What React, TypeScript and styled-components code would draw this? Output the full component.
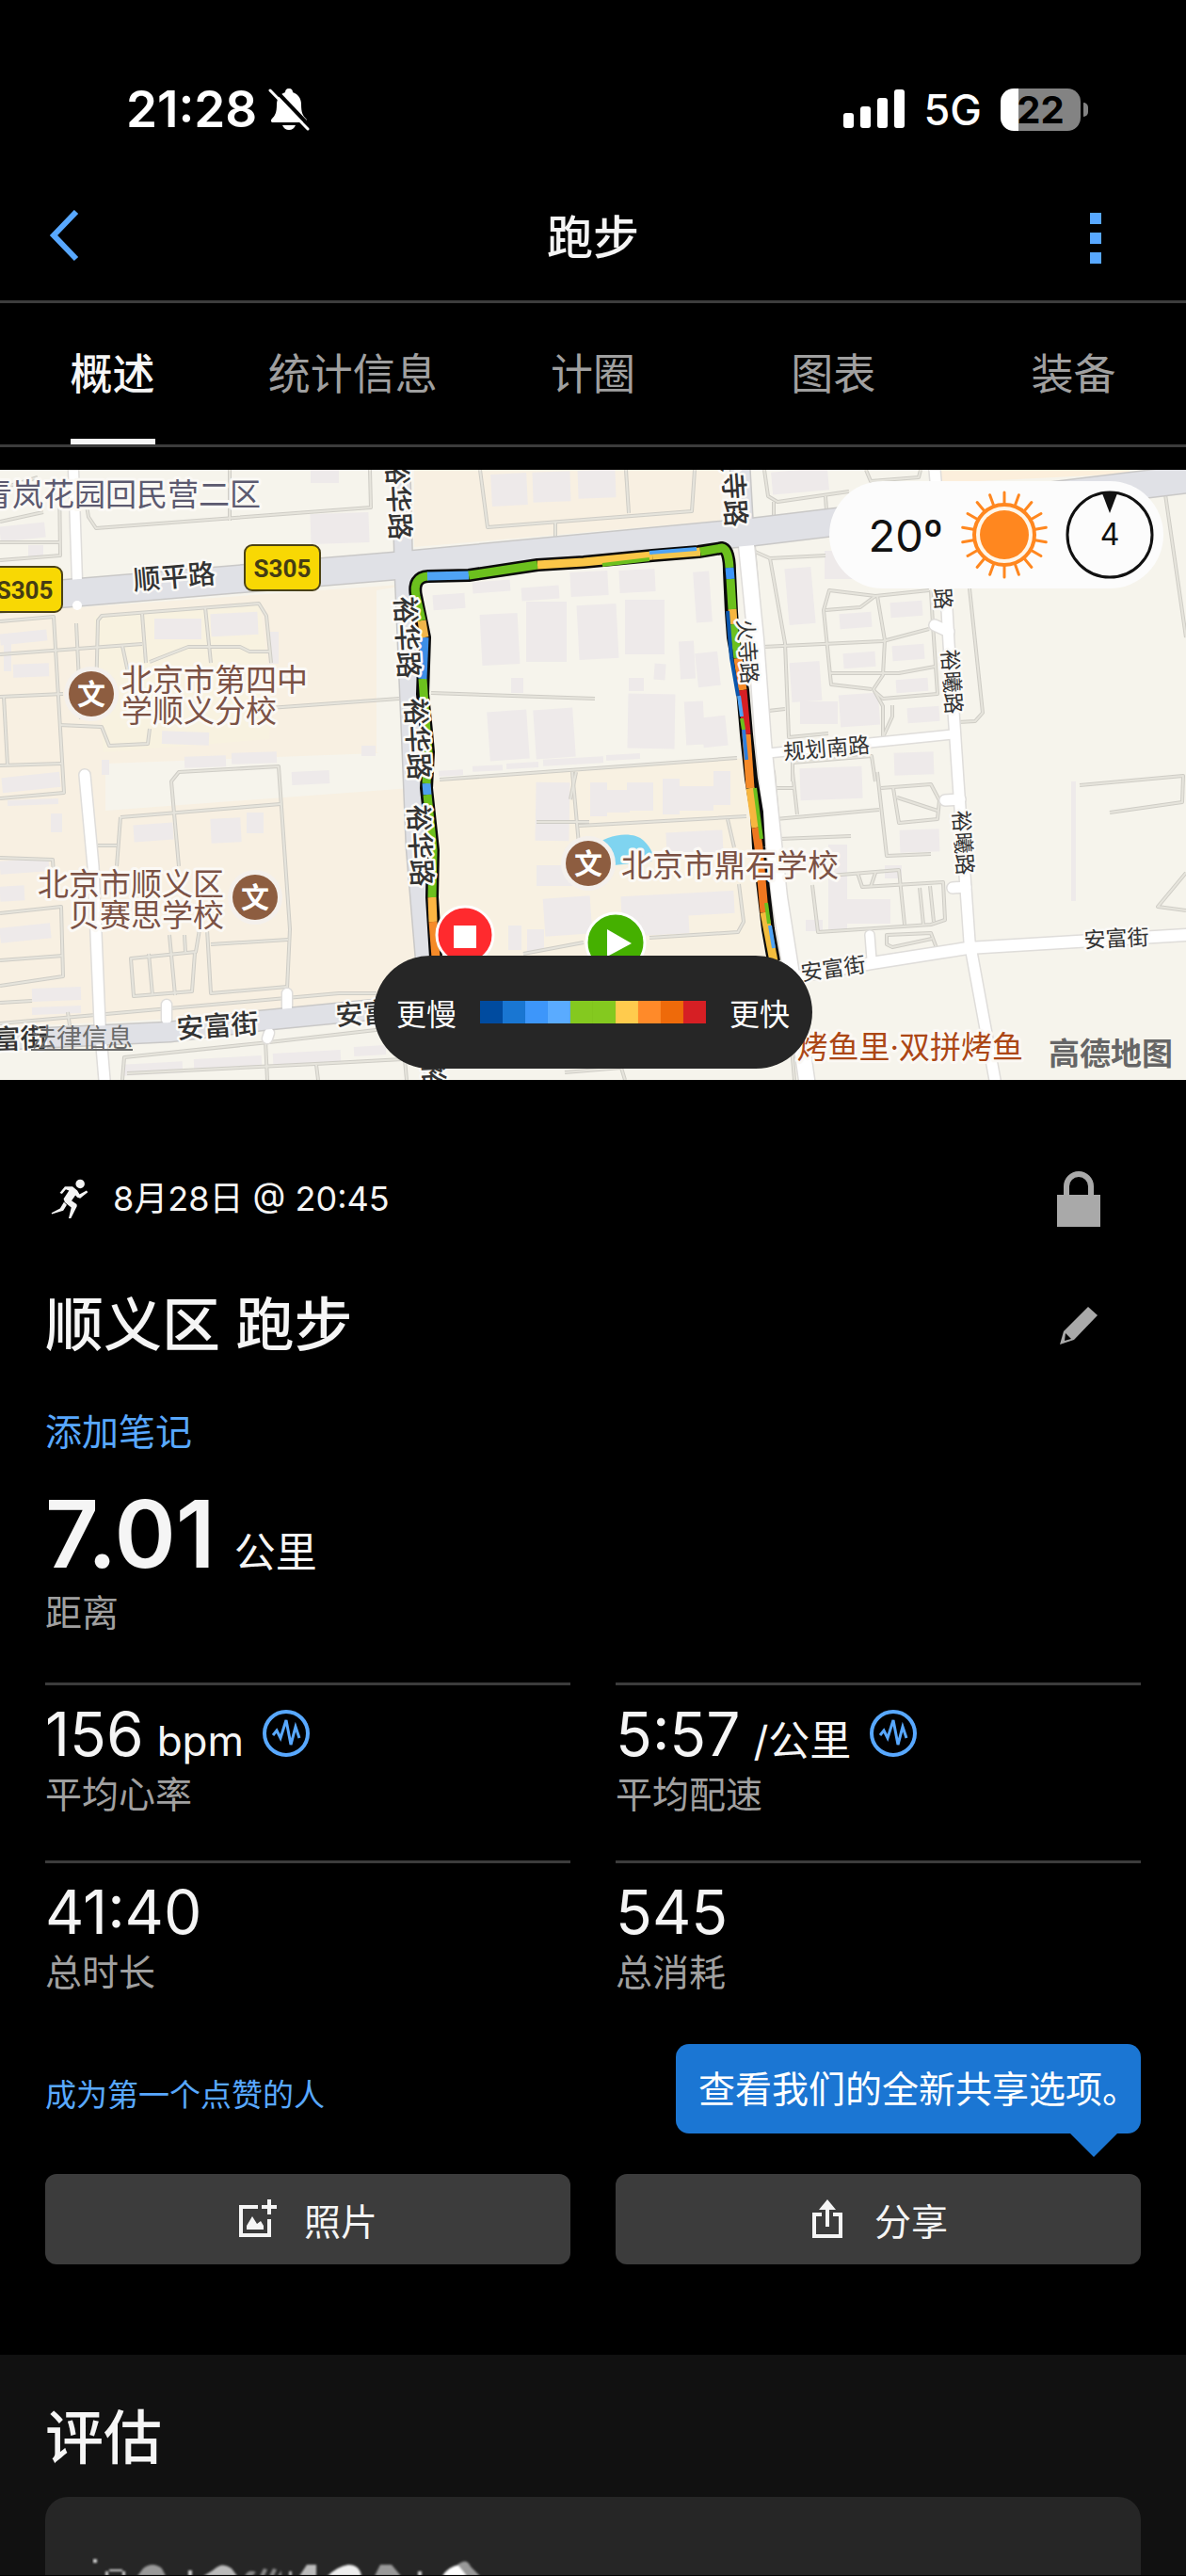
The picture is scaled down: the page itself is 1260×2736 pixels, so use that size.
import React from 'react';
import styled, { createGlobalStyle } from 'styled-components';

const FONT = 'Inter, "Noto Sans CJK SC", sans-serif';

/* ---------- map data ---------- */

const landAreas = [
  { points: '0,152 425,122 440,330 455,570 0,592', fill: '#f8f0e2' },
  { points: '100,156 276,142 288,240 286,286 110,300', fill: '#f8f2e0' },
  { points: '400,128 424,124 437,300 428,312 400,300', fill: '#f6f4ec' },
  { points: '112,312 428,300 437,338 112,362', fill: '#f6f4ec' },
  { points: '440,0 770,0 765,54 440,82', fill: '#f8f0e2' },
  { points: '460,330 795,306 832,520 465,520', fill: '#f8f1e2' },
  { points: '1000,0 1200,0 1200,4 1000,14', fill: '#fcefdc' },
];

// x, y, width, height, tilt
const buildings: number[][] = [
  [330, 0, 30, 14, 0], [330, 46, 62, 32, -2], [0, 58, 48, 16, -6], [30, 80, 16, 14, 0],
  [164, 158, 50, 22, 0], [224, 152, 50, 24, -3], [286, 172, 10, 34, 0], [0, 172, 50, 12, -6],
  [4, 184, 8, 30, 0], [14, 206, 38, 14, -2], [172, 278, 50, 14, 2], [196, 304, 44, 12, -2],
  [246, 300, 48, 12, -2], [384, 293, 15, 11, 0], [310, 320, 40, 14, -3], [108, 308, 8, 16, 0],
  [2, 324, 62, 16, -6], [8, 350, 54, 6, -2], [54, 365, 12, 20, 0], [142, 376, 42, 18, -4],
  [224, 370, 32, 26, -3], [262, 364, 18, 22, 0], [0, 414, 52, 14, -4], [0, 442, 26, 16, -3],
  [0, 484, 54, 16, -6], [34, 550, 52, 14, -2], [34, 570, 52, 8, -2], [130, 630, 64, 12, -3],
  [206, 624, 72, 12, -3], [290, 618, 72, 12, -3], [376, 612, 34, 10, -3],
  [522, 4, 38, 34, -3], [566, 2, 40, 32, -2], [614, 0, 40, 30, -2],
  [460, 132, 34, 16, -4], [502, 118, 40, 12, -4], [554, 124, 40, 14, -4], [606, 108, 40, 26, -3],
  [658, 106, 38, 24, -3], [738, 108, 17, 54, -4], [511, 153, 40, 54, -3], [559, 140, 43, 64, 0],
  [614, 143, 42, 58, -3], [664, 138, 42, 58, 0], [722, 182, 16, 40, -3], [740, 194, 24, 36, -6],
  [543, 221, 13, 16, 0], [668, 221, 16, 14, 0], [695, 206, 12, 17, 4], [667, 238, 50, 58, 1],
  [519, 256, 42, 52, -4], [568, 254, 42, 52, -4], [728, 246, 20, 46, -3], [746, 262, 26, 32, -6],
  [466, 319, 26, 6, -3], [502, 314, 32, 6, -3], [538, 311, 34, 6, -3], [577, 306, 64, 7, -3],
  [644, 302, 36, 6, -3], [569, 332, 36, 62, 1], [627, 332, 18, 36, 0], [645, 340, 24, 24, 0],
  [666, 332, 28, 30, 0], [704, 328, 18, 38, 0], [720, 336, 38, 26, 0], [758, 320, 18, 36, 0],
  [708, 384, 60, 26, -3], [570, 420, 44, 22, 0], [578, 454, 50, 40, -4], [660, 450, 120, 24, -3],
  [560, 488, 18, 24, 0], [664, 474, 68, 20, -3], [540, 484, 14, 26, 0],
  [820, 0, 60, 24, -5], [836, 104, 28, 60, -5], [876, 86, 30, 30, 0], [946, 140, 34, 16, -4],
  [892, 152, 34, 16, -4], [948, 186, 34, 16, -4], [896, 194, 34, 16, -4], [840, 204, 32, 42, -4],
  [952, 222, 34, 14, -4], [892, 238, 42, 34, -4], [964, 252, 34, 16, -4], [850, 246, 40, 24, 0],
  [850, 316, 66, 34, -2], [950, 300, 42, 24, -2], [956, 382, 42, 24, -2], [880, 398, 20, 90, 0],
  [896, 456, 50, 26, 0], [940, 420, 18, 14, 0], [856, 478, 18, 12, 0], [1138, 331, 5, 127, 0],
];

const footways = [
  '92,38 94,50 102,62 394,40 393,0', '244,0 244,54', '0,55 46,45', '63,10 64,91 0,96', '0,77 63,77',
  '0,20 40,8', '0,161 57,156 68,343 0,349', '102,240 104,160 108,155 275,142 283,155 288,205',
  '151,153 155,205', '218,146 224,205', '0,196 151,185', '159,204 200,188 255,188 265,193 286,193',
  '130,187 136,215', '81,163 86,265', '0,241 67,238', '4,241 8,314', '63,271 108,273 116,293 157,291 159,275',
  '0,314 65,312', '286,253 424,243', '190,421 182,331 190,321 296,315 308,488 305,551',
  '128,369 298,355', '124,421 128,369', '104,399 124,399', '224,504 306,499', '220,488 224,556 305,549',
  '207,513 204,554 142,559 139,519 208,512 212,488', '158,514 162,558', '180,494 186,558', '196,494 197,512',
  '0,521 67,516', '0,471 65,464 67,538 0,548', '0,412 56,414 57,430', '0,566 34,564', '72,576 74,590',
  '0,588 360,556 400,556', '130,648 132,624 286,608 408,594', '282,606 284,648', '135,641 335,631 428,626',
  '336,632 338,648', '430,626 432,648',
  '510,0 518,61 735,44 738,0', '665,0 668,46', '590,56 590,71', '458,237 632,243', '467,329 783,306',
  '608,321 615,398', '615,378 793,368', '773,371 780,401', '785,440 790,480 784,491 690,497',
  '556,514 620,502', '612,321 606,350', '626,374 570,374',
  '812,0 816,28 826,34 902,23', '822,34 822,49', '877,28 878,43', '920,0 925,12 976,8 978,0',
  '800,86 818,94 877,91', '801,81 818,293', '818,94 834,184 838,284 880,280', '810,188 938,182 987,169',
  '926,233 883,228 875,149 881,128 930,134 987,128', '932,134 940,181 938,218 928,233 938,251 938,284',
  '877,149 914,146 930,134', '881,216 955,216 993,209', '989,128 991,164 996,238 938,243 930,236',
  '1030,126 1044,258 1036,267 1018,268', '816,256 834,254', '948,250 948,262 938,284',
  '842,331 842,311 926,304 930,331', '1238,26 1260,178', '818,311 822,321 828,392',
  '842,321 847,366', '824,371 934,361', '932,321 942,410 989,408',
  '936,338 989,334 998,351 996,371 955,375 949,338', '953,348 996,362', '824,338 844,338', '828,392 904,389',
  '881,431 955,425 961,483', '911,428 916,443 1002,438 1004,478 989,483 869,491 863,441', '977,444 981,483',
  '988,442 992,480', '925,443 930,428', '995,508 989,492 942,494 942,504 948,507 990,498',
  '1147,335 1257,325 1256,353 1179,364', '1260,428 1230,464 1260,468', '816,321 844,648',
  '600,640 660,635 664,648',
];

const whiteRoads = [
  { points: '78,0 82,118', w: 10 },
  { points: '90,324 99,421 106,588 111,648', w: 11 },
  { points: '177,568 177,584', w: 10 },
  { points: '305,556 305,572', w: 10 },
  { points: '286,598 284,604', w: 10 },
  { points: '793,80 803,180 811,290 816,340 828,454 840,530 857,648', w: 16 },
  { points: '993,0 1006,148 1008,184 1014,271 1018,331 1030,501 1057,648', w: 11 },
  { points: '816,301 1012,281', w: 9 },
  { points: '848,538 926,524 1028,508 1260,494', w: 12 },
  { points: '924,494 926,520', w: 9 },
  { points: '993,165 1008,172', w: 11 },
  { points: '1004,351 1020,350', w: 11 },
  { points: '1012,444 1026,443', w: 11 },
];

const mainRoads = [
  { points: '-10,138 420,102 800,66 1270,9', w: 28 },
  { points: '426,-5 429,110 437,300 441,400 452,530 462,660', w: 18 },
  { points: '786,-5 790,66', w: 20 },
  { points: '-10,606 180,597 277,585 420,571', w: 20 },
];

const routePath =
  'M463 518 L459 454 L460 404 L453 338 L455 300 L453 278 L449 238 L451 178 L442 134 Q438 114 455 113 L498 112 L571 101 L620 98 L693 91 L742 87 L767 83 Q775 84 775 108 L777 151 L779 178 L789 234 L793 281 L798 328 L804 364 L806 401 L812 454 L816 488 L822 522';

const routeParts = [
  { d: 'M463 518 L460 480', c: '#f58a28' },
  { d: 'M460 480 L459 454', c: '#fcb643' },
  { d: 'M459 454 L460 404 L454 345', c: '#6cc01e' },
  { d: 'M454 345 L453 333', c: '#4fa0ee' },
  { d: 'M453 333 L455 300 L453 278 L449 222', c: '#6cc01e' },
  { d: 'M449 222 L451 178', c: '#3d8ee6' },
  { d: 'M451 178 L448 160', c: '#f0b54a' },
  { d: 'M448 160 L442 134 Q438 114 455 113', c: '#6cc01e' },
  { d: 'M454 113 L498 112', c: '#4fa3f5' },
  { d: 'M498 112 L571 101', c: '#6cc01e' },
  { d: 'M571 101 L620 98 L693 91', c: '#fbc648' },
  { d: 'M693 91 L744 87', c: '#f5c64e' },
  { d: 'M744 87 L767 83 Q774 84 775 104', c: '#6cc01e' },
  { d: 'M775 104 L776 116', c: '#3d96fa' },
  { d: 'M776 116 L778 148', c: '#6cc01e' },
  { d: 'M778 148 L779 164', c: '#f7b63f' },
  { d: 'M779 164 L784 200', c: '#6cc01e' },
  { d: 'M784 200 L789 234', c: '#f58a28' },
  { d: 'M789 234 L793 281', c: '#d61f24' },
  { d: 'M793 281 L797 338', c: '#f58a28' },
  { d: 'M797 338 L803 380', c: '#f7b63f' },
  { d: 'M803 380 L806 401 L812 470', c: '#ee7720' },
  { d: 'M812 470 L822 522', c: '#f3bd3e' },
];

const routeEdges = [
  { d: 'M690 88 L740 84', c: '#4fa3f5' },
  { d: 'M640 101 L690 95', c: '#6cc01e' },
  { d: 'M773 150 L777 200 L784 240', c: '#0b57ad' },
  { d: 'M785 240 L788 262', c: '#4fa3f5' },
  { d: 'M788 264 L790 276', c: '#6cc01e' },
  { d: 'M790 276 L793 308', c: '#2f7fdc' },
  { d: 'M802 338 L809 392', c: '#6cc01e' },
  { d: 'M814 460 L817 482', c: '#6cc01e' },
  { d: 'M818 484 L822 508', c: '#4fa3f5' },
];

const roadLabels = [
  { text: '顺平路', x: 185, y: 113, size: 29, tilt: -5 },
  { text: '安富街', x: 231, y: 590, size: 29, tilt: -4 },
  { text: '安富街', x: 400, y: 576, size: 29, tilt: -4 },
  { text: '安富街', x: 7, y: 604, size: 29, tilt: -2 },
  { text: '安富街', x: 885, y: 529, size: 23, tilt: -8 },
  { text: '安富街', x: 1186, y: 497, size: 23, tilt: -3 },
  { text: '规划南路', x: 878, y: 295, size: 23, tilt: -5 },
  { text: '裕华路', x: 424, y: 31, size: 29, tilt: 87 },
  { text: '裕华路', x: 433, y: 178, size: 29, tilt: 87 },
  { text: '裕华路', x: 444, y: 286, size: 29, tilt: 87 },
  { text: '裕华路', x: 447, y: 399, size: 29, tilt: 87 },
  { text: '裕华路', x: 463, y: 673, size: 29, tilt: 87 },
  { text: '火寺路', x: 780, y: 17, size: 29, tilt: 86 },
  { text: '火寺路', x: 795, y: 193, size: 23, tilt: 86 },
  { text: '裕曦路', x: 1001, y: 114, size: 23, tilt: 86 },
  { text: '裕曦路', x: 1012, y: 225, size: 23, tilt: 86 },
  { text: '裕曦路', x: 1024, y: 396, size: 23, tilt: 86 },
];

const schools = [
  { x: 97, y: 238 },
  { x: 271, y: 454 },
  { x: 625, y: 418 },
];

const paceColors = [
  '#004b9f', '#1976d2', '#3d96fa', '#5aabff', '#84c91f',
  '#84c91f', '#ffcb4d', '#ff8a29', '#ee6a0a', '#d61f24',
];

const tabs = ['概述', '统计信息', '计圈', '图表', '装备'];

const stats = [
  { value: '156', unit: 'bpm', label: '平均心率', chart: true },
  { value: '5:57', unit: '/公里', label: '平均配速', chart: true },
  { value: '41:40', label: '总时长' },
  { value: '545', label: '总消耗' },
];

/* ---------- icons ---------- */

const BellOffIcon = () => (
  <svg width="44" height="46" viewBox="0 0 44 46" aria-hidden="true">
    <path
      d="M22 1c3 0 4 2 4 4 6 2 9 7 9 13 0 9 2 12 5 15 2 2 1 4-1 4H5c-2 0-3-2-1-4 3-3 5-6 5-15 0-6 3-11 9-13 0-2 1-4 4-4z"
      fill="#fff"
    />
    <path d="M15 40h14c-1 3-4 5-7 5s-6-2-7-5z" fill="#fff" />
    <path d="M5 0L44 41" stroke="#000" strokeWidth="4" />
    <path d="M2 3L42 44" stroke="#fff" strokeWidth="3" strokeLinecap="round" />
  </svg>
);

const SignalIcon = () => (
  <svg width="66" height="42" viewBox="0 0 66 42" fill="#fff" aria-hidden="true">
    <rect x="0" y="25" width="11" height="16" rx="3" />
    <rect x="18" y="18" width="11" height="23" rx="3" />
    <rect x="36" y="9" width="11" height="32" rx="3" />
    <rect x="54" y="0" width="11" height="41" rx="3" />
  </svg>
);

const BackIcon = () => (
  <svg width="34" height="60" viewBox="0 0 34 60" fill="none" aria-hidden="true">
    <path d="M30 2L6 27L30 52" stroke="#58a8ff" strokeWidth="6" />
  </svg>
);

const MoreIcon = () => (
  <svg width="12" height="54" viewBox="0 0 12 54" fill="#58a8ff" aria-hidden="true">
    <rect width="12" height="12" />
    <rect y="21" width="12" height="12" />
    <rect y="42" width="12" height="12" />
  </svg>
);

const SunIcon = () => (
  <svg width="94" height="94" viewBox="-47 -47 94 94" aria-hidden="true">
    {Array.from({ length: 18 }, (_, i) => (
      <path
        key={i}
        d="M0 -32V-45"
        stroke="#ff871f"
        strokeWidth="3"
        strokeLinecap="round"
        transform={`rotate(${i * 20})`}
      />
    ))}
    <circle r="32" fill="#fff6e8" stroke="#ff871f" strokeWidth="4" />
    <circle r="26" fill="#ff871f" />
  </svg>
);

const WindIcon = () => (
  <svg width="94" height="94" viewBox="-47 -47 94 94" aria-hidden="true">
    <circle r="45" fill="none" stroke="#111" strokeWidth="3" />
    <path d="M-8 -44H8L0 -23z" fill="#111" />
    <text y="11" textAnchor="middle" fontSize="32" fontFamily="Inter, sans-serif" fill="#111">4</text>
  </svg>
);

const RunnerIcon = () => (
  <svg width="40" height="44" viewBox="40 34 118 130" fill="#f5f5f5" aria-hidden="true">
    <circle cx="132" cy="53" r="14" />
    <path d="M68 81L84 61L108 61L123 74L130 86L152 74L156 79L132 98L123 95L117 89L105 106L121 117L122 123L103 161L96 161L104 127L84 111L80 100L97 74L87 70L75 84z" />
    <path d="M81 110L90 119L79 137L43 148L42 144L69 130z" />
  </svg>
);

const LockIcon = () => (
  <svg width="48" height="60" viewBox="0 0 48 60" aria-hidden="true">
    <path d="M11 28V17a13 13 0 0 1 26 0v11" fill="none" stroke="#a9a9a9" strokeWidth="6" />
    <path d="M1 26H47V60H1z" fill="#a9a9a9" />
  </svg>
);

const PencilIcon = () => (
  <svg width="42" height="42" viewBox="0 0 42 42" aria-hidden="true">
    <path d="M31 1L41 10L16 36L1 41L5 27z" fill="#a9a9a9" />
    <path d="M7 29L13 35L6 37z" fill="#000" />
  </svg>
);

const PulseIcon = () => (
  <svg width="50" height="50" viewBox="0 0 50 50" fill="none" stroke="#58a8ff" aria-hidden="true">
    <circle cx="25" cy="25" r="23" strokeWidth="4" />
    <path d="M11 27L15 22L19 30L25 11L30 37L35 18L39 30" strokeWidth="3" />
  </svg>
);

const AddPhotoIcon = () => (
  <svg width="42" height="42" viewBox="0 0 42 42" aria-hidden="true">
    <path d="M21 8H3V38H33V21" fill="none" stroke="#f5f5f5" strokeWidth="4" />
    <path d="M33 0V16M25 8H41" stroke="#f5f5f5" strokeWidth="4" />
    <path d="M9 32V28L15 18L20 26L24 23L27 28V32z" fill="#f5f5f5" />
  </svg>
);

const ShareIcon = () => (
  <svg width="42" height="42" viewBox="-2 0 42 42" aria-hidden="true">
    <path d="M12 16H4V39H32V16H24" fill="none" stroke="#f5f5f5" strokeWidth="4" />
    <path d="M18 29V6" stroke="#f5f5f5" strokeWidth="4" />
    <path d="M18 0L27 11H9z" fill="#f5f5f5" />
  </svg>
);

/* ---------- map ---------- */

const RouteMap = () => (
  <MapDrawing viewBox="0 0 1260 648" preserveAspectRatio="xMidYMid slice" role="img">
    <rect width="1260" height="648" fill="#f6f4ec" />
    {landAreas.map((a) => (
      <polygon key={a.points} points={a.points} fill={a.fill} />
    ))}
    {buildings.map(([x, y, w, h, tilt]) => (
      <rect
        key={`${x}-${y}`}
        x={x}
        y={y}
        width={w}
        height={h}
        fill="#eeeaea"
        transform={`rotate(${tilt} ${x + w / 2} ${y + h / 2})`}
      />
    ))}
    <g fill="none" stroke="#cfcdc6" strokeWidth="4" strokeLinejoin="round">
      {footways.map((p) => <polyline key={p} points={p} />)}
    </g>
    <g fill="none" stroke="#e6e4dc" strokeWidth="2" strokeLinejoin="round">
      {footways.map((p) => <polyline key={p} points={p} />)}
    </g>
    <g fill="none" strokeLinejoin="round" strokeLinecap="round">
      {whiteRoads.map((r) => <polyline key={r.points} points={r.points} stroke="#dfddda" strokeWidth={r.w + 3} />)}
      {mainRoads.map((r) => <polyline key={r.points} points={r.points} stroke="#c9c8c7" strokeWidth={r.w + 3} />)}
      {whiteRoads.map((r) => <polyline key={r.points} points={r.points} stroke="#fff" strokeWidth={r.w} />)}
      {mainRoads.map((r) => <polyline key={r.points} points={r.points} stroke="#e0e1e6" strokeWidth={r.w} />)}
    </g>
    <path d="M632 400c10-12 40-18 52-6 8 8 12 16 8 22l-60 6z" fill="#7fd4f0" />
    <circle cx="82" cy="144" r="5" fill="#fff" />

    <g fill="none" strokeLinejoin="round">
      <path d={routePath} stroke="#0a0a0a" strokeWidth="14" />
      {routeParts.map((r) => <path key={r.d} d={r.d} stroke={r.c} strokeWidth="9" />)}
      {routeEdges.map((r) => <path key={r.d} d={r.d} stroke={r.c} strokeWidth="4" />)}
    </g>

    <g fill="#333" stroke="#fbfaf7" strokeWidth="5" strokeLinejoin="round" paintOrder="stroke" textAnchor="middle">
      {roadLabels.map((l) => (
        <text
          key={`${l.x}-${l.y}`}
          x={l.x}
          y={l.y + Math.round(l.size * 0.37)}
          fontSize={l.size}
          fontWeight={l.size > 25 ? 500 : 400}
          transform={`rotate(${l.tilt} ${l.x} ${l.y})`}
        >
          {l.text}
        </text>
      ))}
    </g>

    {[{ x: -14, y: 103 }, { x: 260, y: 80 }].map((s) => (
      <g key={s.x}>
        <rect x={s.x} y={s.y} width="80" height="48" rx="8" fill="#f8d804" stroke="#4b4216" strokeWidth="2" />
        <ShieldText x={s.x + 40} y={s.y + 34}>S305</ShieldText>
      </g>
    ))}

    {schools.map((s) => (
      <g key={s.x}>
        <circle cx={s.x} cy={s.y} r="29" fill="#f4f0ec" />
        <circle cx={s.x} cy={s.y} r="24" fill="#8d5d40" />
        <text x={s.x} y={s.y + 11} fontSize="30" fontWeight="700" fill="#fff" textAnchor="middle">文</text>
      </g>
    ))}

    <g fontSize="33" stroke="#fbf9f5" strokeWidth="6" strokeLinejoin="round" paintOrder="stroke">
      <text x="-20" y="38" fill="#5c5a70">青岚花园回民营二区</text>
      <g fill="#7b5245">
        <text x="129" y="235">北京市第四中</text>
        <text x="129" y="268">学顺义分校</text>
        <text x="238" y="452" textAnchor="end">北京市顺义区</text>
        <text x="238" y="485" textAnchor="end">贝赛思学校</text>
        <text x="660" y="432">北京市鼎石学校</text>
      </g>
      <text x="1087" y="625" textAnchor="end" fill="#ac4716">烤鱼里·双拼烤鱼</text>
    </g>

    <circle cx="494" cy="494" r="30" fill="#ff2a2e" stroke="#fff" strokeWidth="3" />
    <rect x="482" y="484" width="24" height="24" fill="#fff" />
    <circle cx="654" cy="502" r="31" fill="#45b000" stroke="#fff" strokeWidth="3" />
    <path d="M645 488L671 503L645 517z" fill="#fff" />
  </MapDrawing>
);

/* ---------- page ---------- */

const App: React.FC = () => {
  return (
    <Page>
      <GlobalStyle />
      <StatusBar>
        <StatusGroup>
          <Clock>21:28</Clock>
          <BellOffIcon />
        </StatusGroup>
        <StatusGroup>
          <SignalIcon />
          <Network>5G</Network>
          <Battery>22</Battery>
        </StatusGroup>
      </StatusBar>

      <Header>
        <IconButton aria-label="返回"><BackIcon /></IconButton>
        <PageTitle>跑步</PageTitle>
        <IconButton aria-label="更多"><MoreIcon /></IconButton>
      </Header>

      <Tabs role="tablist">
        {tabs.map((tab, i) => (
          <Tab key={tab} role="tab" aria-selected={i === 0} $active={i === 0}>
            <span>{tab}</span>
          </Tab>
        ))}
      </Tabs>

      <MapPanel>
        <RouteMap />
        <WeatherPill>
          <Temperature>20º</Temperature>
          <SunIcon />
          <WindIcon />
        </WeatherPill>
        <LegalLink href="#legal">法律信息</LegalLink>
        <MapBrand>高德地图</MapBrand>
        <PaceLegend>
          <span>更慢</span>
          <PaceScale>
            {paceColors.map((color, i) => (
              <PaceStep key={i} $color={color} />
            ))}
          </PaceScale>
          <span>更快</span>
        </PaceLegend>
      </MapPanel>

      <Summary>
        <DateRow>
          <RunnerIcon />
          <DateText>8月28日 @ 20:45</DateText>
          <IconButton aria-label="隐私"><LockIcon /></IconButton>
        </DateRow>
        <NameRow>
          <Heading>顺义区 跑步</Heading>
          <IconButton aria-label="编辑"><PencilIcon /></IconButton>
        </NameRow>
        <NoteLink href="#note">添加笔记</NoteLink>
        <Distance>
          7.01<Unit>公里</Unit>
        </Distance>
        <StatLabel>距离</StatLabel>

        <StatGrid>
          {stats.map((s) => (
            <Stat key={s.label}>
              <StatValue>
                {s.value}
                {s.unit && <Unit>{s.unit}</Unit>}
                {s.chart && <ChartButton aria-label={s.label}><PulseIcon /></ChartButton>}
              </StatValue>
              <StatLabel>{s.label}</StatLabel>
            </Stat>
          ))}
        </StatGrid>

        <SocialRow>
          <LikeLink href="#likes">成为第一个点赞的人</LikeLink>
          <Hint>查看我们的全新共享选项。</Hint>
        </SocialRow>
        <Actions>
          <ActionButton><AddPhotoIcon />照片</ActionButton>
          <ActionButton><ShareIcon />分享</ActionButton>
        </Actions>
      </Summary>

      <Evaluation>
        <Heading>评估</Heading>
        <EvaluationCard>
          <svg width="440" height="20" viewBox="0 0 440 20" aria-hidden="true">
            <defs>
              <filter id="soft"><feGaussianBlur stdDeviation="1" /></filter>
            </defs>
            <g filter="url(#soft)" fill="#cfcfcf">
              <path d="M1 2h4v4h-4z" />
              <path d="M14 15h3v5h-3zM32 15h3v5h-3zM18 13h14v2h-14zM102 14h4v6h-4z" />
              <path d="M48 20L54 12Q64 4 74 12L78 20z" fill="#999" />
              <path d="M118 20L128 14Q138 4 148 12L154 20z" fill="#bbb" />
              <path d="M162 20q4-8 12-4l-4 4zM178 20l4-8 4 1-3 7zM188 20l4-8 4 1-3 7zM197 20l4-6v6z" fill="#888" />
              <path d="M209 15h3v5h-3zM220 20L228 8H238V20z" fill="#bbb" />
              <path d="M250 20Q260 10 272 8Q284 8 286 20z" fill="#eee" />
              <path d="M300 20L306 8H318L328 20z" fill="#999" />
              <path d="M346 15h4v5h-4z" />
              <path d="M372 20Q378 10 390 8L398 20z" fill="#fff" />
              <path d="M388 8q10-8 14 2l10 10h-14z" fill="#999" />
            </g>
          </svg>
        </EvaluationCard>
      </Evaluation>
    </Page>
  );
};

const GlobalStyle = createGlobalStyle`
  body {
    margin: 0;
    background: #000;
  }
  * {
    box-sizing: border-box;
  }
`;
const Page = styled.div`
  overflow: hidden;
  background: #000;
  color: #f5f5f5;
  font-family: ${FONT};
`;
const StatusBar = styled.div`
  height: 186px;
  padding: 46px 104px 0 134px;
  display: flex;
  align-items: center;
  justify-content: space-between;
  color: #fff;
`;
const StatusGroup = styled.div`
  display: flex;
  align-items: center;
`;
const Clock = styled.span`
  margin-right: 12px;
  font-size: 53px;
  font-weight: 600;
`;
const Network = styled.span`
  margin: 0 20px;
  font-size: 45px;
  font-weight: 500;
`;
const Battery = styled.div`
  position: relative;
  width: 85px;
  height: 45px;
  margin-right: 8px;
  border-radius: 14px;
  background: linear-gradient(to right, #fff 19px, #838383 19px);
  color: #000;
  font-size: 40px;
  font-weight: 700;
  line-height: 45px;
  text-align: center;

  &::after {
    content: '';
    position: absolute;
    right: -8px;
    top: 15px;
    width: 5px;
    height: 15px;
    border-radius: 0 8px 8px 0;
    background: #838383;
  }
`;
const IconButton = styled.button`
  width: 60px;
  height: 60px;
  padding: 0;
  display: flex;
  align-items: center;
  justify-content: center;
  border: 0;
  background: none;
`;
const Header = styled.header`
  height: 136px;
  padding: 0 38px;
  display: grid;
  grid-template-columns: 1fr auto 1fr;
  align-items: center;
  border-bottom: 3px solid #3c3c3c;

  ${IconButton}:last-child {
    justify-self: end;
    margin-right: 28px;
  }
`;
const PageTitle = styled.h1`
  margin: 0;
  font-size: 49px;
  font-weight: 500;
  line-height: 68px;
`;
const Tabs = styled.div`
  height: 153px;
  margin: 0 -8px 24px;
  display: grid;
  grid-template-columns: repeat(5, 1fr);
  border-bottom: 3px solid #3c3c3c;
`;
const Tab = styled.button<{ $active: boolean }>`
  padding: 0;
  border: 0;
  background: none;
  color: ${(p) => (p.$active ? '#f5f5f5' : '#a0a0a0')};
  font-family: inherit;
  font-size: 45px;
  font-weight: ${(p) => (p.$active ? 500 : 400)};

  span {
    display: inline-block;
    line-height: 136px;
    padding-top: 8px;
    border-bottom: 6px solid ${(p) => (p.$active ? '#f5f5f5' : 'transparent')};
  }
`;
const MapPanel = styled.div`
  position: relative;
  height: 648px;
  overflow: hidden;
`;
const MapDrawing = styled.svg`
  display: block;
  width: 100%;
  height: 100%;
`;
const ShieldText = styled.text`
  font-family: Roboto, sans-serif;
  font-size: 26px;
  font-weight: 700;
  fill: #453c14;
  text-anchor: middle;
`;
const WeatherPill = styled.div`
  position: absolute;
  top: 12px;
  right: 24px;
  height: 114px;
  padding: 0 10px 0 42px;
  display: flex;
  align-items: center;
  gap: 18px;
  border-radius: 57px;
  background: #fcfcfc;
`;
const Temperature = styled.span`
  color: #111;
  font-size: 47px;
`;
const LegalLink = styled.a`
  position: absolute;
  left: 33px;
  bottom: 26px;
  color: #6b6b6b;
  font-size: 27px;
  line-height: 36px;
`;
const MapBrand = styled.span`
  position: absolute;
  right: 14px;
  bottom: 6px;
  color: #666;
  font-size: 33px;
  font-weight: 700;
  line-height: 44px;
`;
const PaceLegend = styled.div`
  position: absolute;
  left: 50%;
  bottom: 12px;
  height: 120px;
  padding: 0 24px;
  transform: translateX(-50%);
  display: flex;
  align-items: center;
  gap: 25px;
  border-radius: 60px;
  background: #262626;
  color: #fff;
  font-size: 32px;
  white-space: nowrap;
`;
const PaceScale = styled.div`
  display: flex;
`;
const PaceStep = styled.div<{ $color: string }>`
  width: 24px;
  height: 24px;
  background: ${(p) => p.$color};
`;
const Summary = styled.section`
  padding: 96px 48px;
`;
const DateRow = styled.div`
  height: 60px;
  padding: 0 36px 0 6px;
  display: flex;
  align-items: center;
`;
const DateText = styled.span`
  margin-left: 26px;
  flex: 1;
  font-size: 36px;
  line-height: 44px;
`;
const NameRow = styled.div`
  margin: 63px 0 43px;
  padding-right: 36px;
  display: flex;
  align-items: center;
  justify-content: space-between;
`;
const Heading = styled.h2`
  margin: 0;
  font-size: 62px;
  font-weight: 500;
  line-height: 84px;
`;
const NoteLink = styled.a`
  display: block;
  width: fit-content;
  color: #58a8ff;
  font-size: 39px;
  line-height: 56px;
  text-decoration: none;
`;
const Distance = styled.div`
  margin-top: 24px;
  display: flex;
  align-items: baseline;
  font-size: 99px;
  font-weight: 600;
  line-height: 112px;
`;
const Unit = styled.span`
  margin-left: 20px;
  font-size: 44px;
  font-weight: 400;
  line-height: 56px;
`;
const StatLabel = styled.div`
  color: #a0a0a0;
  font-size: 39px;
  line-height: 56px;
`;
const StatGrid = styled.div`
  margin-top: 46px;
  display: grid;
  grid-template-columns: 1fr 1fr;
  column-gap: 48px;
`;
const Stat = styled.div`
  height: 189px;
  padding-top: 14px;
  border-top: 3px solid #3c3c3c;
`;
const StatValue = styled.div`
  height: 74px;
  display: flex;
  align-items: baseline;
  font-size: 64px;
  line-height: 76px;

  ${Unit} {
    margin-left: 14px;
  }
`;
const ChartButton = styled.button`
  height: 50px;
  margin-left: 20px;
  padding: 0;
  align-self: center;
  border: 0;
  background: none;
`;
const SocialRow = styled.div`
  margin-top: 6px;
  display: flex;
  align-items: center;
  justify-content: space-between;
`;
const LikeLink = styled.a`
  padding-top: 8px;
  color: #58a8ff;
  font-size: 33px;
  text-decoration: none;
`;
const Hint = styled.div`
  position: relative;
  padding: 0 2px 0 24px;
  border-radius: 14px;
  background: #1b76d3;
  color: #fff;
  font-size: 39px;
  line-height: 95px;

  &::after {
    content: '';
    position: absolute;
    right: 25px;
    top: 100%;
    border: 25px solid transparent;
    border-top-color: #1b76d3;
    border-bottom: 0;
  }
`;
const Actions = styled.div`
  margin-top: 43px;
  display: grid;
  grid-template-columns: 1fr 1fr;
  gap: 48px;
`;
const ActionButton = styled.button`
  height: 96px;
  padding: 0;
  display: flex;
  align-items: center;
  justify-content: center;
  gap: 28px;
  border: 0;
  border-radius: 12px;
  background: #3c3c3c;
  color: #f5f5f5;
  font-family: inherit;
  font-size: 39px;
`;
const Evaluation = styled.section`
  padding: 47px 48px 0;
  background: #111;
`;
const EvaluationCard = styled.div`
  height: 83px;
  margin-top: 20px;
  padding: 64px 50px 0;
  overflow: hidden;
  border-radius: 24px 24px 0 0;
  background: #262626;
`;

export default App;
